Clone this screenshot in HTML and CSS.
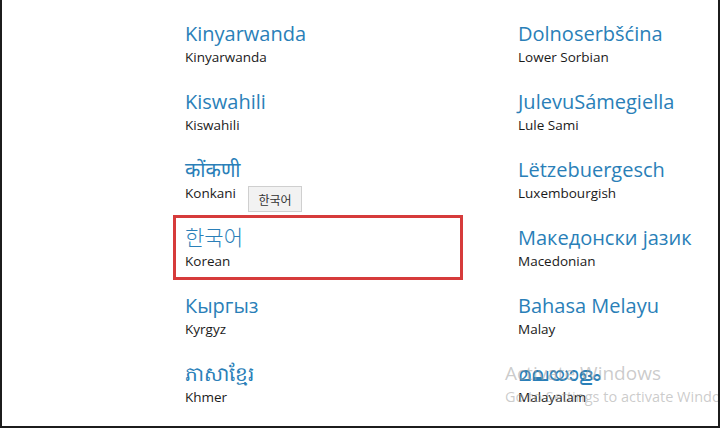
FILE: index.html
```html
<!DOCTYPE html>
<html lang="en">
<head>
<meta charset="utf-8">
<title>Languages</title>
<link rel="stylesheet" href="styles.css">
</head>
<body>
<div class="frame">
  <div class="grid">
    <div class="item"><div class="native">Kinyarwanda</div><div class="english">Kinyarwanda</div></div>
    <div class="item"><div class="native">Dolnoserbšćina</div><div class="english">Lower Sorbian</div></div>
    <div class="item"><div class="native">Kiswahili</div><div class="english">Kiswahili</div></div>
    <div class="item"><div class="native">JulevuSámegiella</div><div class="english">Lule Sami</div></div>
    <div class="item"><div class="native">कोंकणी</div><div class="english">Konkani</div></div>
    <div class="item"><div class="native">Lëtzebuergesch</div><div class="english">Luxembourgish</div></div>
    <div class="item selected"><div class="native korean" lang="ko">한국어</div><div class="english">Korean</div></div>
    <div class="item"><div class="native">Македонски јазик</div><div class="english">Macedonian</div></div>
    <div class="item"><div class="native">Кыргыз</div><div class="english">Kyrgyz</div></div>
    <div class="item"><div class="native">Bahasa Melayu</div><div class="english">Malay</div></div>
    <div class="item"><div class="native">ភាសាខ្មែរ</div><div class="english">Khmer</div></div>
    <div class="item"><div class="native">മലയാളം</div><div class="english">Malayalam</div></div>
  </div>
  <div class="tooltip" lang="ko">한국어</div>
  <div class="watermark">
    <div class="wm-title">Activate Windows</div>
    <div class="wm-sub">Go to Settings to activate Windows.</div>
  </div>
</div>
</body>
</html>
```
FILE: styles.css
```css
html, body {
  margin: 0;
  padding: 0;
  background: #ffffff;
}
.frame {
  position: relative;
  width: 720px;
  height: 428px;
  box-sizing: border-box;
  border-left: 2px solid #1c1c1c;
  border-right: 2px solid #1c1c1c;
  border-bottom: 2px solid #1c1c1c;
  overflow: hidden;
  background: #ffffff;
  font-family: "Open Sans", "Noto Sans", "Noto Sans CJK KR", sans-serif;
}
.grid {
  display: grid;
  grid-template-columns: 290px 290px;
  column-gap: 43px;
  row-gap: 3px;
  padding: 11px 0 0 171px;
}
.item {
  box-sizing: border-box;
  height: 65px;
  padding: 6px 9px 7px;
  border: 3px solid transparent;
}
.item.selected {
  border-color: #d63b3b;
}
.native {
  height: 28px;
  line-height: 28px;
  font-size: 20px;
  color: #2a7fb8;
  white-space: nowrap;
}
.native.korean {
  font-family: "Noto Sans CJK KR", sans-serif;
  font-size: 21px;
  line-height: 25px;
  font-weight: 300;
}
.english {
  height: 18px;
  line-height: 18px;
  font-size: 13.5px;
  color: #1a1a1a;
  white-space: nowrap;
}
.tooltip {
  position: absolute;
  left: 246px;
  top: 186px;
  width: 54px;
  height: 26px;
  box-sizing: border-box;
  border: 1px solid #cfcfcf;
  background: #f2f2f2;
  font-size: 12px;
  line-height: 26px;
  text-align: center;
  color: #333;
  font-family: "Noto Sans CJK KR", sans-serif;
}
.watermark {
  position: absolute;
  left: 503px;
  top: 360px;
  color: rgba(160, 160, 160, 0.55);
  white-space: nowrap;
  pointer-events: none;
}
.wm-title {
  font-size: 19px;
  line-height: 26px;
}
.wm-sub {
  font-size: 14.5px;
  line-height: 22px;
}
```
